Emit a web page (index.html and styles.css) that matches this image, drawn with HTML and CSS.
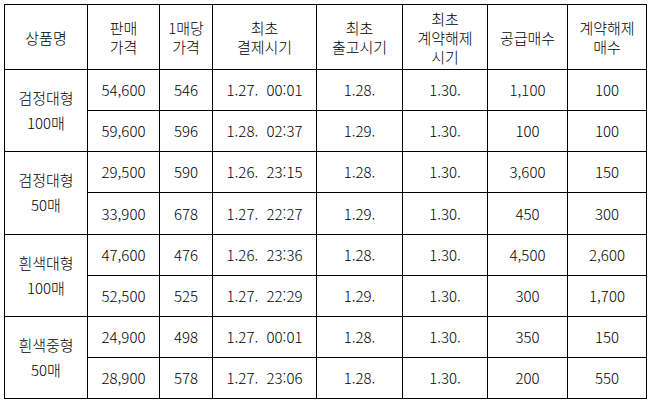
FILE: index.html
```html
<!DOCTYPE html>
<html lang="ko">
<head>
<meta charset="utf-8">
<link rel="stylesheet" href="styles.css">
</head>
<body>
<table class="sheet">
  <colgroup>
    <col class="c1"><col class="c2"><col class="c3"><col class="c4"><col class="c5"><col class="c6"><col class="c7"><col class="c8">
  </colgroup>
  <thead>
    <tr class="head">
      <th>상품명</th>
      <th>판매<br>가격</th>
      <th>1매당<br>가격</th>
      <th>최초<br>결제시기</th>
      <th>최초<br>출고시기</th>
      <th>최초<br>계약해제<br>시기</th>
      <th>공급매수</th>
      <th>계약해제<br>매수</th>
    </tr>
  </thead>
  <tbody>
    <tr><td class="name" rowspan="2">검정대형<br>100매</td><td>54,600</td><td>546</td><td>1.27.&nbsp; 00:01</td><td>1.28.</td><td>1.30.</td><td>1,100</td><td>100</td></tr>
    <tr><td>59,600</td><td>596</td><td>1.28.&nbsp; 02:37</td><td>1.29.</td><td>1.30.</td><td>100</td><td>100</td></tr>
    <tr><td class="name" rowspan="2">검정대형<br>50매</td><td>29,500</td><td>590</td><td>1.26.&nbsp; 23:15</td><td>1.28.</td><td>1.30.</td><td>3,600</td><td>150</td></tr>
    <tr class="tall"><td>33,900</td><td>678</td><td>1.27.&nbsp; 22:27</td><td>1.29.</td><td>1.30.</td><td>450</td><td>300</td></tr>
    <tr><td class="name" rowspan="2">흰색대형<br>100매</td><td>47,600</td><td>476</td><td>1.26.&nbsp; 23:36</td><td>1.28.</td><td>1.30.</td><td>4,500</td><td>2,600</td></tr>
    <tr><td>52,500</td><td>525</td><td>1.27.&nbsp; 22:29</td><td>1.29.</td><td>1.30.</td><td>300</td><td>1,700</td></tr>
    <tr><td class="name" rowspan="2">흰색중형<br>50매</td><td>24,900</td><td>498</td><td>1.27.&nbsp; 00:01</td><td>1.28.</td><td>1.30.</td><td>350</td><td>150</td></tr>
    <tr><td>28,900</td><td>578</td><td>1.27.&nbsp; 23:06</td><td>1.28.</td><td>1.30.</td><td>200</td><td>550</td></tr>
  </tbody>
</table>
</body>
</html>
```

FILE: styles.css
```css
html, body {
  margin: 0;
  padding: 0;
  background: #ffffff;
}
body {
  padding: 4px 0 0 4px;
  font-family: "Noto Sans CJK KR", "Noto Sans", sans-serif;
  font-size: 15px;
  font-weight: 300;
  color: #000;
}
.sheet {
  border-collapse: collapse;
  table-layout: fixed;
  width: 642px;
}
.c1 { width: 83px; }
.c2 { width: 72px; }
.c3 { width: 53px; }
.c4 { width: 104px; }
.c5 { width: 86px; }
.c6 { width: 85px; }
.c7 { width: 80px; }
.c8 { width: 79px; }
.sheet th, .sheet td {
  border: 1px solid #000;
  padding: 0;
  text-align: center;
  vertical-align: middle;
  font-weight: 300;
  line-height: 18px;
  white-space: nowrap;
}
.sheet th {
  line-height: 19px;
}
.sheet td.name {
  line-height: 25px;
  padding-bottom: 2px;
}
.head th { height: 64px; }
.sheet tbody tr { height: 41px; }
.sheet tbody tr.tall { height: 42px; }
```
